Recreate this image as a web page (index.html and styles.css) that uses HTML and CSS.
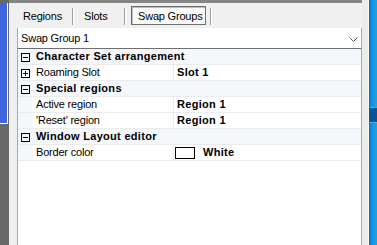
FILE: index.html
```html
<!DOCTYPE html>
<html>
<head>
<meta charset="utf-8">
<link rel="stylesheet" href="styles.css">
</head>
<body>
<div class="screen">
  <div class="leftbar"><div class="leftblue"></div></div>
  <div class="main">
    <div class="tabs">
      <div class="tab tab1">Regions</div>
      <span class="sep"></span>
      <div class="tab tab2">Slots</div>
      <span class="sep"></span>
      <div class="tab tab3 selected">Swap Groups</div>
      <span class="sep sep3"></span>
    </div>
    <div class="combo">
      <span class="combo-text">Swap Group 1</span>
      <svg class="chev" width="9" height="5" viewBox="0 0 9 5"><polyline points="0.5,0.5 4.5,4.5 8.5,0.5" fill="none" stroke="#5a5a5a" stroke-width="1"/></svg>
    </div>
    <div class="grid">
      <div class="row cat">
        <div class="gutter"><svg class="box" width="9" height="9" viewBox="0 0 9 9"><rect x="0.5" y="0.5" width="8" height="8" fill="none" stroke="#000"/><path d="M2 4.5H7" stroke="#000"/></svg></div>
        <div class="cat-label">Character Set arrangement</div>
      </div>
      <div class="row prop">
        <div class="gutter"><svg class="box" width="9" height="9" viewBox="0 0 9 9"><rect x="0.5" y="0.5" width="8" height="8" fill="#fff" stroke="#000"/><path d="M2 4.5H7M4.5 2V7" stroke="#000"/></svg></div>
        <div class="label">Roaming Slot</div>
        <div class="value">Slot 1</div>
      </div>
      <div class="row cat">
        <div class="gutter"><svg class="box" width="9" height="9" viewBox="0 0 9 9"><rect x="0.5" y="0.5" width="8" height="8" fill="none" stroke="#000"/><path d="M2 4.5H7" stroke="#000"/></svg></div>
        <div class="cat-label">Special regions</div>
      </div>
      <div class="row prop">
        <div class="gutter"></div>
        <div class="label">Active region</div>
        <div class="value">Region 1</div>
      </div>
      <div class="row prop">
        <div class="gutter"></div>
        <div class="label">'Reset' region</div>
        <div class="value">Region 1</div>
      </div>
      <div class="row cat">
        <div class="gutter"><svg class="box" width="9" height="9" viewBox="0 0 9 9"><rect x="0.5" y="0.5" width="8" height="8" fill="none" stroke="#000"/><path d="M2 4.5H7" stroke="#000"/></svg></div>
        <div class="cat-label">Window Layout editor</div>
      </div>
      <div class="row prop">
        <div class="gutter"></div>
        <div class="label">Border color</div>
        <div class="value value-color"><span class="swatch"></span><span>White</span></div>
      </div>
    </div>
  </div>
  <div class="rightgap"></div>
  <div class="rightblue"><div class="band"></div></div>
</div>
</body>
</html>
```
FILE: styles.css
```css
html, body {
  margin: 0;
  padding: 0;
}
body {
  width: 377px;
  height: 245px;
  overflow: hidden;
  background: #f0f0f0;
  font-family: "Liberation Sans", Arial, sans-serif;
  font-size: 11px;
  letter-spacing: -0.2px;
  color: #000;
}
.screen {
  display: flex;
  height: 245px;
}
.leftbar {
  width: 9px;
  flex: none;
  background: #696969;
}
.leftblue {
  margin-top: 3px;
  width: 7px;
  height: 120px;
  background: #3e65dc;
  border-right: 1px solid #fff;
  border-bottom: 1px solid #fff;
}
.main {
  width: 345px;
  flex: none;
  padding-left: 8px;
  border-top: 3px solid #858585;
  display: flex;
  flex-direction: column;
  background: #f0f0f0;
}
.tabs {
  height: 25px;
  display: flex;
  align-items: flex-start;
  padding-top: 3px;
  box-sizing: border-box;
}
.tab {
  box-sizing: border-box;
  height: 19px;
  padding-top: 3px;
  border: 1px solid transparent;
  line-height: 13px;
  white-space: nowrap;
}
.tab1 {
  width: 55px;
  padding-left: 5px;
}
.tab2 {
  width: 50px;
  padding-left: 9px;
}
.tab3 {
  width: 75px;
  margin-left: 5px;
  padding-left: 6px;
}
.selected {
  border-color: #6e6e6e;
  background: #fafafa;
  box-shadow: inset 1px 1px 0 #bdbdbd;
}
.sep {
  width: 1px;
  height: 17px;
  margin-top: 2px;
  background: #a0a0a0;
  border-right: 1px solid #fff;
  flex: none;
}
.sep3 {
  margin-left: 4px;
}
.combo {
  background: #fff;
  border-left: 1px solid #a9a9a9;
  border-right: 1px solid #a9a9a9;
  border-bottom: 1px solid #6f6f6f;
  display: flex;
  align-items: flex-start;
  padding: 4px 0 0 3px;
  height: 16px;
}
.combo-text {
  flex: 1;
  line-height: 13px;
}
.chev {
  margin-top: 5px;
  margin-right: 3px;
}
.grid {
  flex: 1;
  background: #fff;
  border-left: 1px solid #a9a9a9;
  border-right: 1px solid #a9a9a9;
  display: flex;
  flex-direction: column;
}
.row {
  display: flex;
  height: 16px;
  box-sizing: border-box;
  line-height: 15px;
  border-bottom: 1px solid #ebebeb;
}
.cat {
  background: #f4f7fc;
}
.gutter {
  width: 14px;
  flex: none;
  background: #f4f7fc;
  padding-left: 3px;
  box-sizing: border-box;
}
.box {
  display: block;
  margin-top: 4px;
}
.cat-label {
  padding-left: 4px;
  font-weight: bold;
  letter-spacing: 0.3px;
  white-space: nowrap;
}
.label {
  width: 142px;
  flex: none;
  padding-left: 4px;
  box-sizing: border-box;
  border-right: 1px solid #ebebeb;
  white-space: nowrap;
}
.value {
  padding-left: 3px;
  font-weight: bold;
  letter-spacing: 0.3px;
  white-space: nowrap;
}
.value-color {
  display: flex;
  align-items: flex-start;
  padding-left: 1px;
}
.swatch {
  width: 18px;
  height: 10px;
  border: 1px solid #000;
  background: #fff;
  margin-top: 2px;
  margin-right: 8px;
  flex: none;
}
.rightgap {
  width: 6px;
  flex: none;
  background: #ececec;
  border-right: 1px solid #f7f7f7;
}
.rightblue {
  width: 8px;
  flex: none;
  background: linear-gradient(to right, #0672c4, #1497de 40%, #1ca2e6);
}
.band {
  margin-top: 107px;
  height: 14px;
  background: #0a5499;
  border-top: 1px solid #4ea6e6;
  border-bottom: 1px solid #4ea6e6;
}
```
